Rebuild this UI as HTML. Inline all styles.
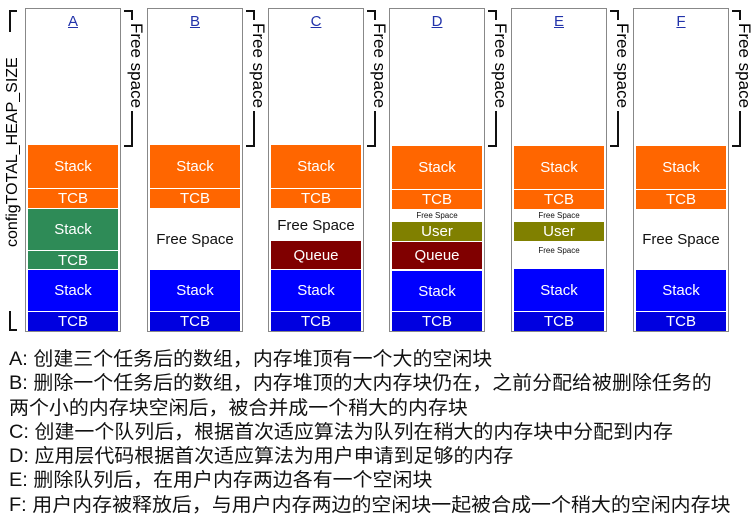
<!DOCTYPE html>
<html><head><meta charset="utf-8"><style>
body{margin:0;width:751px;height:516px;background:#fff;overflow:hidden;position:relative;font-family:"Liberation Sans",sans-serif}
.col{position:absolute;top:8px;width:94px;height:322px;border:1px solid #888;background:#fff}
.lbl{position:absolute;top:4px;left:0;width:100%;text-align:center;color:#2233aa;text-decoration:underline;font-size:15px}
.b{position:absolute;left:2px;width:90px;display:flex;align-items:center;justify-content:center;color:#fff;font-size:15px}
.o{background:#ff6600}.g{background:#2e8b57}.bl{background:#0000ff}.db{background:#0000e0}.q{background:#800000}.u{background:#808000}
.f{color:#111;font-size:15px}.fs{color:#111;font-size:8px}
.br{position:absolute;top:10px;width:7px;height:133px;border:2px solid #111;border-left:none}
.fsx{position:absolute;top:20px;font-size:17px;transform-origin:0 0;transform:rotate(90deg);white-space:nowrap;background:#fff;padding:0 3px}
.txt{position:absolute;left:9px;top:348px;font-family:"Liberation Sans","Noto Sans CJK SC",sans-serif;font-size:19px;line-height:24.3px;color:#111;transform:scaleX(1.05);transform-origin:0 0;white-space:nowrap}
</style></head><body>
<div style="position:absolute;left:9px;top:10px;width:6px;height:20px;border:2px solid #111;border-right:none;border-bottom:none"></div>
<div style="position:absolute;left:9px;top:311px;width:6px;height:18px;border:2px solid #111;border-right:none;border-top:none"></div>
<div style="position:absolute;left:4px;top:247px;font-size:16px;transform-origin:0 0;transform:rotate(-90deg);white-space:nowrap">configTOTAL_HEAP_SIZE</div>

<div class="col" style="left:25px"><div class="lbl">A</div>
<div class="b o" style="top:136px;height:43px">Stack</div>
<div class="b o" style="top:180px;height:19px">TCB</div>
<div class="b g" style="top:200px;height:41px">Stack</div>
<div class="b g" style="top:242px;height:18px">TCB</div>
<div class="b bl" style="top:261px;height:41px">Stack</div>
<div class="b db" style="top:303px;height:19px">TCB</div></div>
<div class="col" style="left:147px"><div class="lbl">B</div>
<div class="b o" style="top:136px;height:43px">Stack</div>
<div class="b o" style="top:180px;height:19px">TCB</div>
<div class="b f" style="top:200px;height:61px">Free Space</div>
<div class="b bl" style="top:261px;height:41px">Stack</div>
<div class="b db" style="top:303px;height:19px">TCB</div></div>
<div class="col" style="left:268px"><div class="lbl">C</div>
<div class="b o" style="top:136px;height:43px">Stack</div>
<div class="b o" style="top:180px;height:19px">TCB</div>
<div class="b f" style="top:200px;height:32px">Free Space</div>
<div class="b q" style="top:232px;height:28px">Queue</div>
<div class="b bl" style="top:261px;height:41px">Stack</div>
<div class="b db" style="top:303px;height:19px">TCB</div></div>
<div class="col" style="left:389px"><div class="lbl">D</div>
<div class="b o" style="top:137px;height:43px">Stack</div>
<div class="b o" style="top:181px;height:19px">TCB</div>
<div class="b fs" style="top:200px;height:13px">Free Space</div>
<div class="b u" style="top:213px;height:19px">User</div>
<div class="b q" style="top:233px;height:27px">Queue</div>
<div class="b bl" style="top:262px;height:40px">Stack</div>
<div class="b db" style="top:303px;height:19px">TCB</div></div>
<div class="col" style="left:511px"><div class="lbl">E</div>
<div class="b o" style="top:137px;height:43px">Stack</div>
<div class="b o" style="top:181px;height:19px">TCB</div>
<div class="b fs" style="top:200px;height:13px">Free Space</div>
<div class="b u" style="top:213px;height:19px">User</div>
<div class="b fs" style="top:233px;height:26px;align-items:flex-start;padding-top:4px;box-sizing:border-box">Free Space</div>
<div class="b bl" style="top:260px;height:42px">Stack</div>
<div class="b db" style="top:303px;height:19px">TCB</div></div>
<div class="col" style="left:633px"><div class="lbl">F</div>
<div class="b o" style="top:137px;height:43px">Stack</div>
<div class="b o" style="top:181px;height:19px">TCB</div>
<div class="b f" style="top:200px;height:61px">Free Space</div>
<div class="b bl" style="top:261px;height:41px">Stack</div>
<div class="b db" style="top:303px;height:19px">TCB</div></div>

<div class="br" style="left:124px"></div><div class="fsx" style="left:146px">Free space</div>
<div class="br" style="left:246px"></div><div class="fsx" style="left:268px">Free space</div>
<div class="br" style="left:367px"></div><div class="fsx" style="left:389px">Free space</div>
<div class="br" style="left:488px"></div><div class="fsx" style="left:510px">Free space</div>
<div class="br" style="left:610px"></div><div class="fsx" style="left:632px">Free space</div>
<div class="br" style="left:732px"></div><div class="fsx" style="left:754px">Free space</div>

<div class="txt">A: 创建三个任务后的数组，内存堆顶有一个大的空闲块<br>B: 删除一个任务后的数组，内存堆顶的大内存块仍在，之前分配给被删除任务的<br>两个小的内存块空闲后，被合并成一个稍大的内存块<br>C: 创建一个队列后，根据首次适应算法为队列在稍大的内存块中分配到内存<br>D: 应用层代码根据首次适应算法为用户申请到足够的内存<br>E: 删除队列后，在用户内存两边各有一个空闲块<br>F: 用户内存被释放后，与用户内存两边的空闲块一起被合成一个稍大的空闲内存块</div>
</body></html>
